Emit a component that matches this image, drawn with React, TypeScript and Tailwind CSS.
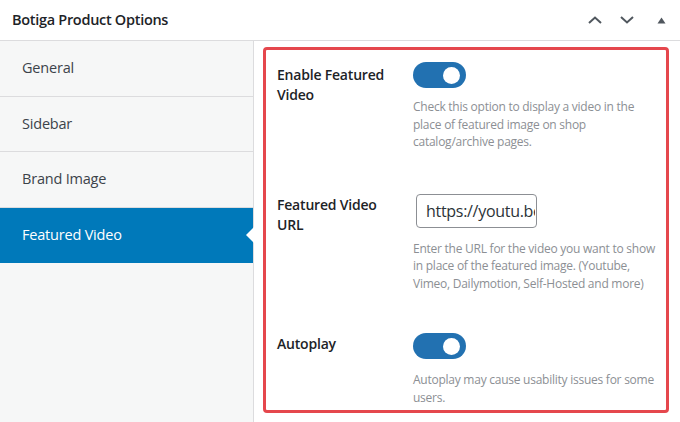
import { useState } from 'react'

const tabs = ['General', 'Sidebar', 'Brand Image', 'Featured Video']

function Toggle({ on }: { on: boolean }) {
  return (
    <div className={`flex h-[26px] w-[53px] items-center rounded-full px-[6px] ${on ? 'justify-end bg-[#2271b1]' : 'justify-start bg-[#c3c4c7]'}`}>
      <span className="block h-[17px] w-[17px] rounded-full bg-white" />
    </div>
  )
}

function Desc({ lines, className = '' }: { lines: string[]; className?: string }) {
  return (
    <p className={`whitespace-nowrap text-[12px] leading-[17.5px] tracking-[-0.25px] text-[#8c8f94] ${className}`}>
      {lines.map((l, i) => (
        <span key={i} className="block">{l}</span>
      ))}
    </p>
  )
}

export default function App() {
  const [active] = useState('Featured Video')

  return (
    <div className="h-[422px] w-[680px] overflow-hidden bg-white text-[#1d2327]" style={{ fontFamily: '"Open Sans", "Noto Sans", sans-serif' }}>
      {/* Box header */}
      <div className="flex h-[41px] items-center justify-between border-b border-[#dcdcde] pl-[12px] pr-[14px]">
        <h2 className="text-[14.5px] font-semibold tracking-[-0.3px] text-[#1d2327]">Botiga Product Options</h2>
        <div className="flex items-center text-[#50575e]">
          <svg width="16" height="10" viewBox="0 0 16 10" className="mr-[16px]">
            <path d="M2 8 L8 2.5 L14 8" fill="none" stroke="currentColor" strokeWidth="2" />
          </svg>
          <svg width="16" height="10" viewBox="0 0 16 10" className="mr-[22px]">
            <path d="M2 2 L8 7.5 L14 2" fill="none" stroke="currentColor" strokeWidth="2" />
          </svg>
          <svg width="9" height="7" viewBox="0 0 9 7">
            <path d="M0.5 6.5 L4.5 0.5 L8.5 6.5 Z" fill="currentColor" />
          </svg>
        </div>
      </div>

      <div className="flex h-[381px]">
        {/* Tabs */}
        <ul className="w-[254px] shrink-0 border-r border-[#dcdcde] bg-[#f6f7f7]">
          {tabs.map((tab) => (
            <li
              key={tab}
              className={`relative flex h-[55.5px] items-center pl-[22px] text-[14.5px] tracking-[-0.2px] ${
                tab === active ? 'bg-[#0079ba] text-white' : 'border-b border-[#dcdcde] text-[#3c434a]'
              }`}
            >
              {tab}
              {tab === active && (
                <span className="absolute right-[-1px] top-1/2 h-0 w-0 -translate-y-1/2 border-y-[8px] border-r-[8px] border-y-transparent border-r-white" />
              )}
            </li>
          ))}
        </ul>

        {/* Panel */}
        <div className="flex-1 pl-[9px] pr-[11px] pt-[6px]">
          <div className="h-[366px] rounded-[4px] border-[3px] border-[#e5474d] pl-[11px] pt-[12px]">
            <div className="flex">
              <div className="w-[136px] pt-[3px] text-[14px] font-semibold leading-[20px] tracking-[-0.2px]">Enable Featured<br />Video</div>
              <div>
                <Toggle on />
                <Desc
                  className="mt-[10px]"
                  lines={['Check this option to display a video in the', 'place of featured image on shop', 'catalog/archive pages.']}
                />
              </div>
            </div>

            <div className="mt-[43px] flex">
              <div className="w-[136px] pt-[1px] text-[14px] font-semibold leading-[20px] tracking-[-0.2px]">Featured Video<br />URL</div>
              <div>
                <div className="pl-[3px]">
                  <input
                    readOnly
                    value="https://youtu.be/dQw4w9WgXcQ"
                    className="h-[34px] w-[121px] rounded-[4px] border border-[#8c8f94] bg-white pl-[9px] pr-[1px] text-[16px] tracking-[-0.3px] text-[#2c3338] outline-none"
                    style={{ fontFamily: '"Open Sans", sans-serif' }}
                  />
                </div>
                <Desc
                  className="mt-[12px]"
                  lines={['Enter the URL for the video you want to show', 'in place of the featured image. (Youtube,', 'Vimeo, Dailymotion, Self-Hosted and more)']}
                />
              </div>
            </div>

            <div className="mt-[41px] flex">
              <div className="w-[136px] pt-[1px] text-[14px] font-semibold leading-[20px] tracking-[-0.2px]">Autoplay</div>
              <div>
                <Toggle on />
                <Desc className="mt-[12px]" lines={['Autoplay may cause usability issues for some', 'users.']} />
              </div>
            </div>
          </div>
        </div>
      </div>
    </div>
  )
}
